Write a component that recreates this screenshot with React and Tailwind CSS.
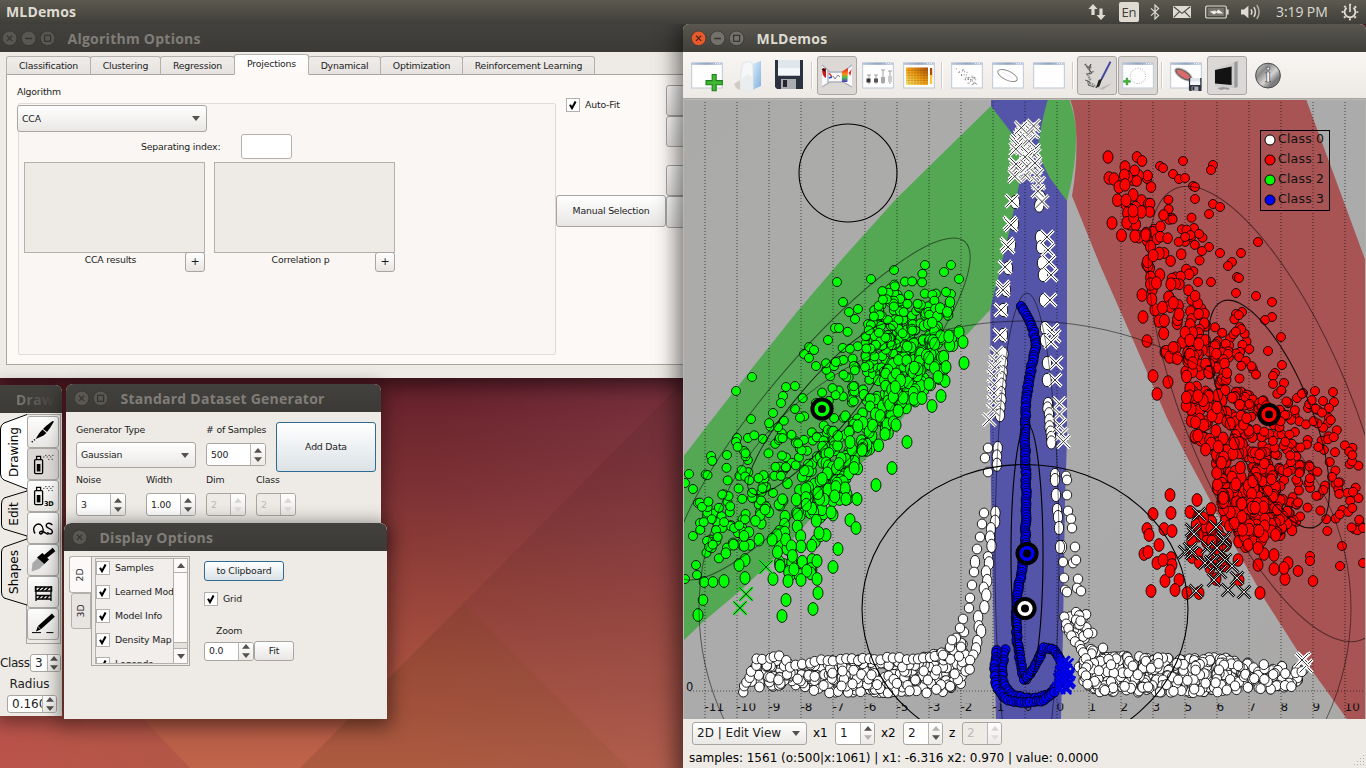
import React from "react";

/* ---------- shared widgets ---------- */

function Arrows({ up = "#55524e", down = "#55524e" }) {
  return (
    <svg viewBox="0 0 8 14" className="h-[14px] w-2 shrink-0">
      <path d="M4 0L8 4.8H0Z" fill={up} />
      <path d="M4 14L8 9.2H0Z" fill={down} />
    </svg>
  );
}

function Spin({ value, className, textClass = "text-[10px]", btn = "w-[15px]", disabled, up, down }) {
  return (
    <div className={"flex overflow-hidden rounded-[3px] border border-[#a9a6a2] " + (disabled ? "bg-[#eeebe7] text-[#bdbab7] " : "bg-white text-[#1c1c1c] ") + className}>
      <div className={"flex flex-1 items-center overflow-hidden whitespace-nowrap pl-1 " + textClass}>{value}</div>
      <div className={"flex shrink-0 items-center justify-center border-l border-[#b9b6b2] bg-gradient-to-b from-white to-[#eceae7] " + btn}>
        <Arrows up={up || (disabled ? "#d9d6d3" : "#55524e")} down={down || (disabled ? "#dfdcda" : "#55524e")} />
      </div>
    </div>
  );
}

function Combo({ value, className, textClass = "text-[10px]" }) {
  return (
    <div className={"flex items-center justify-between rounded-[3px] border border-[#a9a6a2] bg-gradient-to-b from-white to-[#eae8e5] pl-1 pr-1.5 text-[#1c1c1c] " + className}>
      <span className={textClass}>{value}</span>
      <svg viewBox="0 0 8 5" className="h-[5px] w-2"><path d="M0 0H8L4 5Z" fill="#55524e" /></svg>
    </div>
  );
}

function Button({ children, className }) {
  return (
    <div className={"flex items-center justify-center rounded-[3px] border border-[#a9a6a2] bg-gradient-to-b from-white to-[#e8e6e4] text-[#1c1c1c] " + className}>
      {children}
    </div>
  );
}

function Check({ label, className = "" }) {
  return (
    <div className={"flex items-center " + className}>
      <svg viewBox="0 0 14 14" className="size-[14px] shrink-0">
        <rect x=".5" y=".5" width="13" height="13" fill="#fff" stroke="#b4b1ad" />
        <path d="M4 6.8L6 10.2L9.6 3.6" fill="none" stroke="#000" strokeWidth="2.1" />
      </svg>
      <span className="ml-[5px] whitespace-nowrap">{label}</span>
    </div>
  );
}

function WinDot({ kind, active }) {
  const close = kind === "close";
  const fill = active && close ? "#e8592c" : active ? "#73716a" : "#585751";
  const ink = active && close ? "#4a2014" : "#34332f";
  return (
    <svg viewBox="0 0 16 16" className="size-4">
      <circle cx="7.6" cy="8.3" r="7.3" fill={fill} stroke="#33322e" strokeWidth=".7" />
      {close && <path d="M5 5.7L10.2 10.9M10.2 5.7L5 10.9" stroke={ink} strokeWidth="1.2" />}
      {kind === "min" && <path d="M4.2 8.5H11" stroke={ink} strokeWidth="1.3" />}
      {kind === "max" && <rect x="4.6" y="5.3" width="6" height="6" fill="none" stroke={ink} strokeWidth="1.2" />}
    </svg>
  );
}

function TitleBar({ title, dots, active, className = "", titleClass = "ml-[12px]" }) {
  return (
    <div className={"flex h-7 shrink-0 items-center overflow-hidden " + (active ? "bg-gradient-to-b from-[#59574f] to-[#403f3a] text-[#dfdbd2] " : "bg-gradient-to-b from-[#42413d] to-[#3b3a36] text-[#807d78] ") + className}>
      <div className="flex gap-[3px]">
        {dots.map((d) => <WinDot key={d} kind={d} active={active} />)}
      </div>
      <span className={"whitespace-nowrap pt-0.5 font-['Open_Sans','Noto_Sans',sans-serif] text-[14px] font-bold leading-[26px] tracking-[0.25px] " + titleClass}>{title}</span>
    </div>
  );
}

/* ---------- top panel ---------- */

function TopPanel() {
  return (
    <div className="relative flex h-6 items-center justify-between bg-gradient-to-b from-[#5c5a50] to-[#3f3e38] pl-1.5 pr-[7px] font-['Open_Sans','Noto_Sans',sans-serif] text-[#dfdbd2]">
      <span className="text-[14px] font-bold leading-6 tracking-[0.15px]">MLDemos</span>
      <div className="flex items-center">
        <svg viewBox="0 0 18 16" className="h-4 w-[18px]" fill="#dfdbd2">
          <path d="M5 0L9.6 5H6.6V11H3.4V5H.4Z" />
          <path d="M13 16L17.6 11H14.6V4.5H11.4V11H8.4Z" />
        </svg>
        <span className="ml-[13px] flex h-5 w-5 items-center justify-center rounded-[2px] bg-[#dfdbd2] text-[13px] leading-none text-[#3c3b37]">En</span>
        <svg viewBox="0 0 10 16" className="ml-[11px] h-4 w-[10px]" fill="none" stroke="#dfdbd2" strokeWidth="1.2">
          <path d="M1 4.4L8.6 11.4L5 15V1L8.6 4.6L1 11.6" />
        </svg>
        <svg viewBox="0 0 18 12" className="ml-[13px] h-3 w-[18px]">
          <rect width="18" height="12" fill="#dfdbd2" />
          <path d="M.8 .8L9 7.4L17.2 .8M.8 11.4L6.4 5.6M17.2 11.4L11.6 5.6" fill="none" stroke="#45443e" strokeWidth="1.1" />
        </svg>
        <svg viewBox="0 0 24 14" className="ml-[14px] h-[14px] w-6">
          <rect x=".7" y="1" width="20.6" height="12" rx="1.6" fill="none" stroke="#dfdbd2" strokeWidth="1.2" />
          <rect x="2.8" y="3" width="16.4" height="8" fill="#77746c" />
          <rect x="22" y="4.4" width="1.6" height="5.2" fill="#dfdbd2" />
          <path d="M4.8 6.6L10.4 5.6L11 7L13.4 4.4L18.4 8.4L12.6 8.6L12 7.4L9 9.6Z" fill="#f0ede6" />
        </svg>
        <svg viewBox="0 0 21 16" className="ml-[12px] h-4 w-[21px]" fill="none" stroke="#dfdbd2" strokeWidth="1.5">
          <path d="M0 5.6H3L7.4 1.8V14.2L3 10.4H0Z" fill="#dfdbd2" stroke="none" />
          <path d="M10 5.4Q11.8 8 10 10.6M12.8 3.2Q16 8 12.8 12.8" />
          <path d="M15.8 1Q20.4 8 15.8 15" stroke="#aeaba2" />
        </svg>
        <span className="ml-[14px] w-[54px] whitespace-nowrap text-[14px] leading-6 tracking-[-0.1px]">3:19 PM</span>
        <svg viewBox="0 0 18 18" className="ml-[11px] size-[18px]" fill="none" stroke="#dfdbd2">
          <path d="M5.6 4.7A5.4 5.4 0 1 0 12.4 4.7" strokeWidth="1.8" />
          <circle cx="9" cy="9" r="7.3" strokeWidth="2" strokeDasharray="2 3.73" strokeDashoffset="1" />
          <path d="M9 2.4V9" strokeWidth="2.8" stroke="#4a4942" />
          <path d="M9 1.6V9" strokeWidth="1.7" />
        </svg>
      </div>
    </div>
  );
}

/* ---------- algorithm options ---------- */

const TABS = [
  ["Classification", "w-[85px]"], ["Clustering", "w-[71px]"], ["Regression", "w-[75px]"], ["Projections", "w-[75px]"],
  ["Dynamical", "w-[73px]"], ["Optimization", "w-[83px]"], ["Reinforcement Learning", "w-[133px]"],
];

function ResultBox({ label }) {
  return (
    <div className="w-[181px]">
      <div className="h-[91px] border border-[#b4b1ad] bg-[#eeebe7]" />
      <div className="-mt-px flex items-start">
        <span className="mt-0.5 w-[161px] pl-[12px] text-center leading-[11px]">{label}</span>
        <Button className="h-5 w-5 text-[11px]">+</Button>
      </div>
    </div>
  );
}

function AlgorithmWindow() {
  return (
    <div className="absolute left-0 top-6 flex h-[354px] w-[700px] flex-col bg-[#eeebe6] text-[9.33px] tracking-[-0.19px] text-[#1c1c1c] shadow-[0_4px_18px_4px_rgba(0,0,0,0.5)]">
      <TitleBar title="Algorithm Options" dots={["close", "min", "max"]} className="pl-[1.5px]" titleClass="ml-[12px]" />
      <div className="z-10 -mb-px flex h-[23px] items-end pl-1.5">
        {TABS.map(([t, w], i) => (
          <div key={t} className={"-mr-px flex items-center justify-center whitespace-nowrap rounded-t-[3px] border border-[#b4b1ad] " + w + (i === 3 ? " z-10 h-[21px] border-b-[#fdf9f6] bg-gradient-to-b from-white to-[#fdf9f6] pb-px" : " h-[19px] border-b-[#a8a5a1] bg-gradient-to-b from-[#efece9] to-[#e6e3e0]")}>
            {t}
          </div>
        ))}
      </div>
      <div className="ml-1.5 flex h-[291px] border border-[#a8a5a1] bg-[#fdf9f6]">
        <div className="w-[549px] pl-[10px] pt-[10px]">
          <div className="leading-[13px]">Algorithm</div>
          <div className="ml-px mt-[5px] h-[252px] w-[538px] rounded-[2px] border border-[#dfdbd8] bg-[#faf6f3]">
            <Combo value="CCA" className="-ml-[2px] mt-px h-[27px] w-[190px]" textClass="text-[9.33px]" />
            <div className="mt-[2px] flex items-center pl-[122px]">
              <span className="w-[100px] whitespace-nowrap">Separating index:</span>
              <div className="h-[25px] w-[51px] rounded-[3px] border border-[#b4b1ad] bg-white" />
            </div>
            <div className="mt-[3px] flex gap-[9px] pl-[5px]">
              <ResultBox label="CCA results" />
              <ResultBox label="Correlation p" />
            </div>
          </div>
        </div>
        <div className="flex w-[110px] flex-col">
          <Check label="Auto-Fit" className="ml-[10px] mt-[23px]" />
          <Button className="mt-[83px] h-8 w-[110px]">Manual Selection</Button>
        </div>
        <div className="flex w-[34px] flex-col pt-[10px]">
          <Button className="h-[31px] w-[60px]" />
          <Button className="h-[31px] w-[60px]" />
          <Button className="mt-[18px] h-[31px] w-[60px]" />
          <Button className="h-8 w-[60px]" />
        </div>
      </div>
    </div>
  );
}

/* ---------- drawing palette ---------- */

const TOOL_ICONS = [
  <g key="a"><path d="M26 4.5L24.5 4L18 9L15 12L19 15L22 11Z" /><path d="M14.4 12.4L18.4 16L15.6 18.6L10 21L7.6 22L11 16.5Z" /><path d="M7 22.5L3.4 25.4" stroke="#000" strokeWidth="1.3" strokeDasharray="1.3 1.6" /></g>,
  <g key="b"><rect x="6.6" y="10.6" width="8" height="14" rx="1" fill="none" stroke="#000" strokeWidth="1.3" /><rect x="8.8" y="15" width="3.6" height="7.4" /><path d="M8.6 10V7.4H12.6V10" fill="none" stroke="#000" strokeWidth="1.3" /><path d="M15 8H25M17 6.4H26M20 10.4H25" stroke="#555" strokeDasharray="1.5 2" /></g>,
  <g key="c"><rect x="6.6" y="9.6" width="8" height="14" rx="1" fill="none" stroke="#000" strokeWidth="1.3" /><rect x="8.8" y="14" width="3.6" height="7.4" /><path d="M8.6 9V6.4H12.6V9" fill="none" stroke="#000" strokeWidth="1.3" /><path d="M15 7.4H25M17 5.6H26M20 9.6H25" stroke="#555" strokeDasharray="1.5 2" /><text x="16" y="24.6" fontSize="6.6" fontWeight="bold" fontFamily="DejaVu Sans" letterSpacing="-.3">3D</text></g>,
  <g key="d" fill="none" stroke="#000" strokeWidth="1.4"><path d="M7 20.5C3.5 15 8 9.5 12.5 11.5C16 14 16 20 13 21C10.5 21 11.5 17.5 14.5 18.5C17 19.5 18.5 21 20.5 21.4" /><path d="M24.4 12.2C22 9 17.4 10 18.4 13.4C19.6 16 24.4 15.4 24.4 18.4C24.4 21.6 20 21.6 19.6 19" /></g>,
  <g key="e"><path d="M10 13L16.5 19L11 24L3.6 26.6L4.5 18Z" fill="#aaa" /><path d="M9 12.5L14.4 8L21 14.5L16.4 19Z" /><path d="M17 11.8L26 4.5" stroke="#000" strokeWidth="4.2" /></g>,
  <g key="f" fill="none" stroke="#000" strokeWidth="1.3"><path d="M8 9V24M23 9V24M7.4 10H23.6V14H7.4ZM8 18.5H23V22H8Z" /><path d="M9.5 14L13.5 10M13.5 14L17.5 10M17.5 14L21.5 10M10 22L13 18.6M14 22L17 18.6M18 22L21 18.6" strokeWidth="1.5" /></g>,
  <g key="g"><path d="M11.4 18.6L25.4 6.2" stroke="#000" strokeWidth="4.4" /><path d="M8 22.4L9.6 17.6L12.6 20.6Z" /><path d="M4 23.6H13M18.4 23.6H25.4" stroke="#000" strokeWidth="1" /></g>,
];

function VTab({ label, d, active, h, className }) {
  return (
    <div className={"relative flex w-[27px] items-center justify-center " + className}>
      <svg viewBox={`0 0 27 ${h}`} className="absolute inset-0 size-full"><path d={d} fill={active ? "#fff" : "#edeae6"} stroke="#000" strokeWidth="1" /></svg>
      <span className="relative -rotate-90 whitespace-nowrap text-[12px] text-black">{label}</span>
    </div>
  );
}

function DrawingWindow() {
  return (
    <div className="absolute left-0 top-[385px] flex h-[331px] w-[62px] flex-col overflow-hidden rounded-tr-[7px] bg-[#eeebe6] text-[#1c1c1c] shadow-[0_4px_18px_3px_rgba(0,0,0,0.4)]">
      <TitleBar title="Draw" dots={[]} className="pl-[16px]" titleClass="bg-gradient-to-r from-[#807d78] to-[#403f3b] bg-clip-text text-transparent" />
      <div className="flex h-[231px] pt-px">
        <div className="flex w-[26px] flex-col">
          <VTab label="Drawing" active h={76} className="h-[76px]" d="M27 .5L4 9Q.5 11 .5 15V60Q.5 64 4 66L27 75" />
          <VTab label="Edit" h={48} className="h-[48px]" d="M27 1L4 8Q1.5 10 1.5 14V34Q1.5 38 4 39L27 46" />
          <VTab label="Shapes" h={68} className="h-[68px]" d="M27 1L4 9Q1.5 11 1.5 14V54Q1.5 58 4 60L27 67" />
        </div>
        <div className="flex w-[35px] flex-col border border-[#a9a6a2] pt-px">
          {TOOL_ICONS.map((ic, i) => (
            <div key={i} className={"flex h-8 w-8 shrink-0 items-center justify-center rounded-[3px] border border-[#aaa7a3] " + (i === 1 ? "bg-[#dcd8d5]" : "bg-gradient-to-b from-[#fdfdfd] to-[#e9e7e4]")}>
              <svg viewBox="0 0 30 30" className="size-[30px]">{ic}</svg>
            </div>
          ))}
        </div>
      </div>
      <div className="mt-2.5 flex items-center">
        <span className="w-[30px] whitespace-nowrap text-[12px] tracking-[-0.4px]">Class</span>
        <Spin value="3" className="h-[18px] w-[31px]" textClass="text-[12px]" btn="w-[13px]" />
      </div>
      <div className="mt-[4px] pr-[3px] text-center text-[12px] leading-4">Radius</div>
      <Spin value="0.160" className="ml-[7px] mt-[3px] h-[18px] w-[50px]" textClass="text-[12px]" btn="w-[14px]" />
    </div>
  );
}

/* ---------- dataset generator ---------- */

function GeneratorWindow() {
  return (
    <div className="absolute left-[66px] top-[384px] flex h-[160px] w-[315px] flex-col overflow-hidden rounded-t-[7px] bg-[#eeebe6] text-[9.33px] tracking-[-0.19px] text-[#1c1c1c] shadow-[0_4px_18px_3px_rgba(0,0,0,0.4)]">
      <TitleBar title="Standard Dataset Generator" dots={["close", "max"]} className="pl-[7.5px]" titleClass="ml-[12px]" />
      <div className="flex pl-[10px] pt-[10px]">
        <div className="w-[130px]">
          <div className="leading-4">Generator Type</div>
          <Combo value="Gaussian" className="mt-[4px] h-[26px] w-[120px]" textClass="text-[9.33px]" />
        </div>
        <div className="w-[70px]">
          <div className="whitespace-nowrap leading-4">{"# of Samples"}</div>
          <Spin value="500" className="mt-[5px] h-[23px] w-[60px]" textClass="text-[9.33px]" />
        </div>
        <Button className="h-[50px] w-[100px] !border-[#2d6a94] !to-[#dbe2e6]">Add Data</Button>
      </div>
      <div className="flex pl-[10px]">
        <div className="w-[70px]"><div className="leading-4">Noise</div><Spin value="3" className="mt-[5px] h-[23px] w-[50px]" textClass="text-[9.33px]" /></div>
        <div className="w-[60px]"><div className="leading-4">Width</div><Spin value="1.00" className="mt-[5px] h-[23px] w-[50px]" textClass="text-[9.33px]" /></div>
        <div className="w-[50px]"><div className="leading-4">Dim</div><Spin value="2" disabled className="mt-[5px] h-[23px] w-[40px]" textClass="text-[9.33px]" /></div>
        <div className="w-[50px]"><div className="leading-4">Class</div><Spin value="2" disabled className="mt-[5px] h-[23px] w-[40px]" textClass="text-[9.33px]" /></div>
      </div>
    </div>
  );
}

/* ---------- display options ---------- */

function DisplayWindow() {
  return (
    <div className="absolute left-16 top-[523px] flex h-[196px] w-[323px] flex-col overflow-hidden rounded-t-[7px] bg-[#eeebe6] text-[9.33px] tracking-[-0.15px] text-[#1c1c1c] shadow-[0_4px_18px_4px_rgba(0,0,0,0.45)]">
      <TitleBar title="Display Options" dots={["close"]} className="rounded-t-[7px] pl-[7.5px]" titleClass="ml-[12px]" />
      <div className="flex pl-[5px] pt-[5px]">
        <div className="flex w-[22px] flex-col items-end">
          <div className="flex h-[37px] w-[22px] items-center justify-center rounded-l-[3px] border border-r-0 border-[#b4b1ad] bg-[#fbfaf8]"><span className="-rotate-90">2D</span></div>
          <div className="flex h-[36px] w-[20px] items-center justify-center rounded-l-[3px] border border-[#b4b1ad] bg-[#e7e4e1]"><span className="-rotate-90">3D</span></div>
        </div>
        <div className="flex h-[110px] w-[99px] border border-[#a9a6a2] p-px pl-[3px]">
          <div className="flex h-[106px] w-[93px] border border-[#b4b1ad] bg-[#f1eeeb]">
            <div className="flex h-[104px] w-[77px] flex-col gap-[10px] overflow-hidden pt-[2px]">
              {["Samples", "Learned Models", "Model Info", "Density Map", "Legends"].map((t) => <Check key={t} label={t} className="shrink-0" />)}
            </div>
            <div className="flex flex-1 flex-col items-center justify-between border-l border-[#b4b1ad] bg-[#fbfaf9]">
              <div className="flex h-[14px] w-full items-center justify-center border-b border-[#b4b1ad]"><svg viewBox="0 0 8 5" className="h-[5px] w-2"><path d="M0 5H8L4 0Z" fill="#55524e" /></svg></div>
              <div className="flex w-full flex-col">
                <div className="h-[7px] w-full border-y border-[#b4b1ad] bg-[#e4e2df]" />
                <div className="flex h-[14px] w-full items-center justify-center"><svg viewBox="0 0 8 5" className="h-[5px] w-2"><path d="M0 0H8L4 5Z" fill="#55524e" /></svg></div>
              </div>
            </div>
          </div>
        </div>
        <div className="ml-[14px] pt-[5px]">
          <Button className="h-5 w-20 !border-[#2d6a94] !to-[#dbe2e6] text-[9.33px]">to Clipboard</Button>
          <Check label="Grid" className="mt-[11px]" />
          <div className="mt-[17px] pl-3 leading-4">Zoom</div>
          <div className="mt-[2px] flex items-center">
            <Spin value="0.0" className="h-[19px] w-[50px]" textClass="text-[9.33px]" />
            <Button className="h-5 w-10">Fit</Button>
          </div>
        </div>
      </div>
    </div>
  );
}

/* ---------- plot ---------- */

function makeRng(seed) {
  let s = seed;
  return () => {
    s = (s + 0x6d2b79f5) | 0;
    let t = Math.imul(s ^ (s >>> 15), 1 | s);
    t = (t + Math.imul(t ^ (t >>> 7), 61 | t)) ^ t;
    return ((t ^ (t >>> 14)) >>> 0) / 4294967296;
  };
}

function inside(x, y, poly) {
  let c = false;
  for (let i = 0, j = poly.length - 1; i < poly.length; j = i++) {
    const [xi, yi] = poly[i];
    const [xj, yj] = poly[j];
    if (yi > y !== yj > y && x < ((xj - xi) * (y - yi)) / (yj - yi) + xi) c = !c;
  }
  return c;
}

function scatter(poly, n, seed) {
  const r = makeRng(seed);
  const xs = poly.map((p) => p[0]);
  const ys = poly.map((p) => p[1]);
  const x0 = Math.min(...xs), x1 = Math.max(...xs), y0 = Math.min(...ys), y1 = Math.max(...ys);
  const out = [];
  while (out.length < n) {
    const x = x0 + r() * (x1 - x0), y = y0 + r() * (y1 - y0);
    if (inside(x, y, poly)) out.push([x, y]);
  }
  return out;
}

function along(pts, step, jitter = 0, seed = 1) {
  const r = makeRng(seed);
  const out = [];
  for (let i = 0; i < pts.length - 1; i++) {
    const [ax, ay] = pts[i];
    const [bx, by] = pts[i + 1];
    const n = Math.max(1, Math.round(Math.hypot(bx - ax, by - ay) / step));
    for (let k = 0; k < n; k++) out.push([ax + ((bx - ax) * k) / n + (r() - 0.5) * jitter, ay + ((by - ay) * k) / n + (r() - 0.5) * jitter]);
  }
  return out;
}

const GREEN = [
  [837,282],[843,302],[894,270],[871,279],[849,312],[858,309],[855,319],[835,328],[839,328],[828,340],[809,347],[814,350],[804,354],[809,358],[816,366],[752,377],[736,391],[786,387],[795,386],[783,396],[781,403],[795,409],[773,413],[751,419],[737,438],[736,442],[748,438],[744,451],[711,456],[727,455],[689,474],[685,483],[693,489],[698,503],[693,536],[700,523],[696,565],[697,575],[704,582],[713,582],[724,581],[703,600],[698,615],[685,579],[745,578],[745,560],[739,565],[742,543],[749,532],
  ...scatter([[690,480],[720,450],[770,420],[815,420],[812,505],[765,545],[715,568],[703,550],[703,500]], 105, 11),
  ...scatter([[830,420],[850,360],[870,315],[885,290],[905,280],[930,330],[925,390],[890,430],[850,500],[810,500],[775,475],[782,450]], 205, 5),
  ...scatter([[865,325],[880,290],[925,272],[950,285],[956,335],[945,375],[900,405],[865,380]], 190, 7),
  ...scatter([[820,430],[900,405],[895,430],[860,480],[855,505],[820,500]], 50, 8),
  ...scatter([[785,490],[850,480],[833,515],[822,540],[812,575],[778,580],[768,545]], 62, 9),
  ...scatter([[698,500],[725,498],[745,520],[735,545],[710,560],[700,530]], 24, 10),
  ...scatter([[820,370],[855,320],[860,350],[835,400],[790,430],[800,400]], 22, 12),
  [925,265],[951,265],[959,279],[944,272],[946,292],[950,302],[959,332],[963,342],[964,363],[946,367],[945,381],[938,377],[929,384],[941,396],[932,406],[914,399],[922,398],[907,442],[892,468],[876,485],[846,499],[857,499],[850,520],[856,528],[839,464],[862,450],[826,535],[819,533],[838,549],[833,567],[817,561],[817,579],[818,593],[813,609],[786,600],[782,616],[773,579],[780,566],[801,580],[788,581],[829,453],[850,442],[885,434],[896,425],
];

const RED = [
  [1108,157],[1137,157],[1142,161],[1183,161],[1213,165],[1211,170],[1109,178],[1114,179],[1119,187],[1125,167],[1134,173],[1160,166],[1163,168],[1173,174],[1179,179],[1185,178],[1193,186],[1195,187],[1151,187],[1147,178],[1195,199],[1213,204],[1220,207],[1209,214],[1112,223],[1258,242],[1241,253],[1232,262],[1228,266],[1237,277],[1239,278],[1198,282],[1211,282],[1209,247],[1220,253],[1236,293],[1256,296],[1272,302],[1272,317],[1265,320],[1242,312],[1236,314],[1281,337],[1268,351],[1282,365],[1275,373],[1284,383],[1273,376],[1273,384],[1142,295],[1143,317],[1153,376],[1157,394],[1147,341],[1165,352],[1168,382],[1315,391],[1333,392],[1334,402],[1323,401],[1297,398],[1303,393],[1329,408],[1329,418],[1328,423],[1308,408],
  ...scatter([[1119,160],[1145,160],[1152,188],[1150,205],[1134,196],[1118,188]], 9, 21),
  ...scatter([[1117,200],[1165,198],[1200,215],[1198,228],[1160,245],[1120,240]], 34, 22),
  ...scatter([[1134,235],[1200,225],[1215,262],[1190,280],[1150,275],[1138,262]], 32, 23),
  ...scatter([[1150,275],[1180,280],[1200,300],[1210,330],[1240,310],[1250,350],[1195,380],[1160,350],[1150,320]], 80, 24),
  ...scatter([[1165,350],[1215,335],[1260,370],[1260,400],[1180,395]], 58, 25),
  ...scatter([[1183,395],[1260,390],[1285,480],[1280,530],[1228,535],[1218,500],[1216,460],[1197,450],[1190,420]], 300, 26),
  ...scatter([[1260,390],[1300,390],[1340,420],[1350,445],[1364,450],[1363,530],[1300,535],[1270,530]], 150, 27),
  ...scatter([[1225,505],[1300,500],[1290,535],[1245,547],[1232,540]], 60, 28),
  [1363,528],[1342,546],[1310,556],[1310,561],[1340,566],[1288,563],[1298,571],[1285,579],[1284,568],[1274,569],[1274,555],[1264,554],[1258,565],[1258,548],[1238,560],[1248,545],[1260,593],[1313,581],[1363,563],
  [1170,495],[1197,500],[1153,514],[1171,513],[1190,512],[1211,509],[1147,529],[1149,535],[1164,529],[1172,531],[1159,545],[1144,554],[1148,552],[1171,558],[1157,563],[1163,560],[1172,565],[1165,581],[1170,571],[1179,580],[1175,590],[1151,591],[1192,557],[1187,593],[1199,593],[1239,580],[1210,568],[1216,579],
  ...scatter([[1188,515],[1210,518],[1228,545],[1225,575],[1205,570],[1192,555]], 34, 29),
];

const WHITE_FLOOR = [
  ...scatter([[745,689],[752,665],[775,658],[800,668],[815,661],[925,657],[945,650],[962,640],[968,662],[965,682],[940,693],[820,693],[790,684],[765,688]], 420, 31),
  ...scatter([[1078,665],[1090,648],[1100,655],[1180,658],[1235,657],[1250,664],[1248,690],[1215,693],[1095,692],[1082,680]], 430, 32),
  ...scatter([[1250,664],[1275,663],[1303,668],[1306,675],[1290,688],[1258,690],[1250,680]], 55, 33),
  ...along([[743,691],[752,672],[758,660],[780,657],[790,667],[815,660],[930,658],[948,650]], 6, 3, 34),
];

const WHITE_STRANDS = [
  ...along([[997,448],[996,473]], 8, 2, 41), ...along([[995,513],[991,537],[988,564],[985,597],[984,609],[979,619],[981,633],[976,648],[972,662],[967,676]], 9, 4, 42),
  [988,448],[985,458],[988,472],[984,513],[982,524],[980,537],[977,549],[975,562],[974,572],[972,585],[970,598],[969,608],[963,619],[964,632],[960,628],[956,638],[950,647],[952,640],[961,647],[943,655],
  [1015,202],[1014,224],[1011,245],[1008,268],[1006,290],[1003,310],[1003,335],
  ...along([[1003,354],[1003,372],[1001,385],[1001,400],[1000,415],[1000,425]], 8, 1, 43),
  ...along([[1040,198],[1040,212]], 7, 2, 44), [1040,237],[1041,247],[1042,263],[1043,275],[1044,300],[1045,328],[1045,340],[1047,363],[1047,380],[1048,404],
  ...along([[1048,408],[1050,427],[1052,448]], 6, 1, 45),
  [1055,475],[1055,480],[1056,495],[1057,510],[1058,517],[1059,528],[1062,547],[1060,547],[1063,562],[1064,578],[1065,590],[1067,592],[1066,476],[1067,480],[1067,495],[1068,511],[1071,519],[1072,528],[1075,547],[1073,563],[1076,560],[1078,579],[1077,588],[1081,591],
  ...scatter([[1063,608],[1085,610],[1095,630],[1092,640],[1075,640],[1065,628]], 26, 46), ...along([[1068,630],[1075,641],[1083,649],[1088,665],[1082,672],[1090,688]], 6, 4, 47), [1103,648],
];

const WHITE_X = [
  ...scatter([[1020,126],[1034,125],[1036,150],[1037,175],[1014,180],[1013,158]], 34, 51),
  ...along([[1036,165],[1042,210]], 10, 4, 52),
  [1012,201],[1010,223],[1011,225],[1007,244],[1008,247],[1005,267],[1003,287],[1003,290],[1001,310],[1000,335],
  ...along([[998,352],[995,375],[993,400],[989,428]], 9, 3, 53),
  [1047,237],[1048,250],[1049,262],[1051,275],[1050,300],[1052,330],[1054,336],[1051,342],[1056,363],[1055,380],
  ...along([[1060,403],[1060,425],[1063,450]], 9, 3, 54), [1304,659],[1306,666],[1302,660],
];

const DARK_X = [[1199,514],[1192,530],[1194,534],[1185,552],[1192,553],[1190,549],[1216,527],[1224,538],[1223,541],[1208,547],[1212,553],[1222,553],[1205,563],[1216,566],[1225,560],[1232,566],[1220,572],[1214,580],[1237,578],[1196,591],[1228,590],[1244,592],[1217,548],[1211,562]];

const BLUE_CURVE = [
  ...along([[1021,306],[1027,316],[1033,330],[1036,345],[1033,360],[1029,380],[1026,400],[1025,440],[1026,480],[1026,520],[1025,545],[1022,570],[1018,590],[1016,612],[1017,640],[1020,660],[1024,679],[1030,674],[1038,660],[1044,647],[1055,650],[1063,665],[1062,682]], 2.6, 1.2, 61),
  ...along([[1005,650],[1002,665],[1003,685],[1013,696],[1033,699],[1048,695],[1058,685]], 3, 1.5, 62),
  ...along([[997,651],[995,668],[996,686],[1005,699],[1022,703],[1042,701],[1056,691]], 3, 1.5, 63),
];

const BLUE_X = scatter([[1060,660],[1068,658],[1072,672],[1070,686],[1064,694],[1057,688]], 26, 64);

const AXIS_LABELS = ["-11", "-10", "-9", "-8", "-7", "-6", "-5", "-3", "-2", "-1", "0", "0", "1", "2", "3", "5", "6", "7", "8", "9", "10"];

function Dots({ pts, fill, size }) {
  return pts.map(([x, y], i) => {
    const [rx, ry] = size(x, y);
    return <ellipse key={i} cx={x.toFixed(1)} cy={y.toFixed(1)} rx={rx} ry={ry} fill={fill} stroke="#000" strokeWidth="1" strokeOpacity=".85" />;
  });
}

function Crosses({ pts, outer, inner, ow, r = 6.5 }) {
  return pts.map(([x, y], i) => {
    const d = `M${(x - r).toFixed(1)} ${(y - r).toFixed(1)}l${2 * r} ${2 * r}m0 ${-2 * r}l${-2 * r} ${2 * r}`;
    return <g key={i} fill="none"><path d={d} stroke={outer} strokeWidth={ow} /><path d={d} stroke={inner} strokeWidth="1" /></g>;
  });
}

function Marker({ x, y, color }) {
  return <g><circle cx={x} cy={y} r="9.6" fill={color} stroke="#000" strokeWidth="4" /><circle cx={x} cy={y} r="4" /></g>;
}

const greenSize = (x, y) => {
  const p = (x - 822) * 0.754 + (y - 409) * 0.657;
  return p > 38 ? [5, 6.4] : p > 22 ? [4.8, 5.4] : [4.5, 4.5];
};
const redSize = (x, y) => {
  const p = (x - 1269) * 0.92 - (y - 414) * 0.38;
  if (y > 490 && x < 1225) return [5, 6.4];
  return p < -38 ? [5, 6.3] : p < -20 ? [4.8, 5.4] : [4.5, 4.5];
};
const strandSize = (x, y) => (x > 1062 || x < 975 || (y > 440 && x < 990 && y < 560) ? [4.7, 4.9] : [4.7, 6.6]);

function Plot() {
  const sortFar = (pts, size) => [...pts].sort((a, b) => size(...a)[1] - size(...b)[1]);
  return (
    <svg viewBox="683 99 683 620" className="block h-[620px] w-[683px] shrink-0" fontFamily="DejaVu Sans, sans-serif">
      <defs>
        <linearGradient id="bg" x1="0" y1="0" x2="1" y2="1"><stop offset="0" stopColor="#aaaba9" /><stop offset=".5" stopColor="#acabac" /><stop offset="1" stopColor="#aaa9a8" /></linearGradient>
        <clipPath id="axis"><rect x="683" y="703.5" width="683" height="15" /></clipPath>
      </defs>
      <rect x="683" y="99" width="683" height="620" fill="url(#bg)" />
      <path d="M991 100H1067V440L1065 500L1063 633L1061 719H996L993 600L990 430Z" fill="#5454a8" />
      <path d="M991 106L950 146L896 199L843 258L796 313L757 362L713 418L683 457V641L703 622L741 590L760 572L787 545L846 480L896 427L950 353L975 326L990 310L1000 270L1010 228L1020 180L1023 158L1017 140Z" fill="#54a854" />
      <path d="M1048 99H1069Q1075 115 1076 130Q1077 165 1067 201L1050 178Q1040 160 1038 148Q1041 122 1048 99Z" fill="#54a854" />
      <path d="M1070 99H1306L1334 175L1366 262V719H1347L1297 650L1265 600L1233 543L1187 457L1167 418L1130 333L1100 265L1072 196Q1078 160 1076 130Q1075 112 1070 99Z" fill="#a85454" />
      <g stroke="#000" strokeOpacity=".36" strokeWidth="1.7">
        {AXIS_LABELS.map((v, i) => <path key={i} d={`M${705 + i * 32} 102V719`} strokeDasharray="1 2" />)}
        <path d="M690 691H1366" strokeDasharray="1 2" />
      </g>
      <g clipPath="url(#axis)" fontSize="12" fill="#111">
        {AXIS_LABELS.map((v, i) => <text key={i} x={704.5 + i * 32} y="711">{v}</text>)}
      </g>
      <text x="686" y="691" fontSize="11.5" fill="#111">0</text>
      <Dots pts={WHITE_FLOOR} fill="#fff" size={() => [4.7, 5]} />
      <Dots pts={WHITE_STRANDS} fill="#fff" size={strandSize} />
      <Dots pts={sortFar(RED, redSize)} fill="#f00" size={redSize} />
      <Dots pts={sortFar(GREEN, greenSize)} fill="#0f0" size={greenSize} />
      <Dots pts={BLUE_CURVE} fill="#00f" size={() => [4.7, 4.8]} />
      <Crosses pts={WHITE_X} outer="#fff" inner="#3a3a3a" ow="3.2" />
      <Crosses pts={DARK_X} outer="#111" inner="#ccc" ow="2.8" />
      <Crosses pts={BLUE_X} outer="#00f" inner="#0000a8" ow="2.6" r={5} />
      <Crosses pts={[[766,567],[746,594],[740,608]]} outer="#0e0" inner="#031" ow="2.8" />
      <g fill="none" stroke="#000">
        <circle cx="848" cy="173" r="49" strokeWidth="1.1" />
        <ellipse cx="1025" cy="609" rx="163" ry="144.5" strokeWidth="1.1" />
        <ellipse cx="1025" cy="609" rx="326" ry="288" strokeWidth="1" strokeOpacity=".5" />
        <ellipse cx="1027" cy="554" rx="16" ry="130" strokeWidth="1.1" />
        <ellipse cx="1027" cy="554" rx="32" ry="261" strokeWidth="1" strokeOpacity=".5" />
        <ellipse cx="822" cy="409" rx="110" ry="26.5" transform="rotate(-49.6 822 409)" strokeWidth="1" strokeOpacity=".75" />
        <ellipse cx="822" cy="409" rx="220" ry="53" transform="rotate(-49.6 822 409)" strokeWidth="1" strokeOpacity=".5" />
        <ellipse cx="1269" cy="414" rx="122" ry="41.5" transform="rotate(67.5 1269 414)" strokeWidth="1.1" strokeOpacity=".85" />
        <ellipse cx="1269" cy="414" rx="244" ry="83" transform="rotate(67.5 1269 414)" strokeWidth="1" strokeOpacity=".5" />
      </g>
      <Marker x={822} y={409} color="#0f0" />
      <Marker x={1269} y={414.5} color="#f00" />
      <Marker x={1027} y={553.5} color="#00f" />
      <Marker x={1025} y={608.5} color="#fff" />
      <rect x="1260.5" y="130.5" width="69" height="80" fill="none" stroke="#000" />
      {["#fff", "#f00", "#0f0", "#00f"].map((c, i) => (
        <g key={c}>
          <circle cx="1270" cy={140 + i * 20} r="5" fill={c} stroke="#000" />
          <text x="1278" y={143 + i * 20} fontSize="12.5" textLength="46" fill="#111">{"Class " + i}</text>
        </g>
      ))}
      <path d="M683.5 99V719M683 99.5H1366" stroke="#b9b7b4" />
      <path d="M1365.5 99V719" stroke="#b4b2b0" />
    </svg>
  );
}

/* ---------- toolbar ---------- */

function Sheet({ children }) {
  return (
    <svg viewBox="0 0 32 32" className="size-8">
      <defs><linearGradient id="sheetBar" x1="0" x2="1" y1="0" y2="0"><stop offset="0" stopColor="#b9c7da" /><stop offset=".5" stopColor="#93a5bf" /><stop offset="1" stopColor="#c3cfdf" /></linearGradient></defs>
      <rect x=".6" y="3.6" width="30.8" height="24.4" fill="#fefefe" stroke="#c6cfdb" strokeWidth="1.2" />
      <rect x="0" y="2.4" width="32" height="2.4" fill="url(#sheetBar)" />
      <path d="M24 3.6H30" stroke="#eef" strokeDasharray="1 1" />
      {children}
    </svg>
  );
}

function Floppy({ x = 0, y = 0, s = 1 }) {
  return (
    <g transform={`translate(${x} ${y}) scale(${s})`}>
      <path d="M2 0H30V29H4L2 27Z" fill="#2d3240" />
      <rect x="5" y="0" width="22" height="15.5" fill="#dfe7ec" />
      <rect x="5" y="8" width="22" height="7.5" fill="#f4f7f9" />
      <rect x="8" y="19" width="15" height="10" fill="#a9adb1" />
      <rect x="10" y="20" width="4" height="7" fill="#23262f" />
    </g>
  );
}

function Plus({ x, y, s }) {
  return <path transform={`translate(${x} ${y}) scale(${s})`} d="M6 0H10V6H16V10H10V16H6V10H0V6H6Z" fill="#3db830" stroke="#1b7a1b" strokeWidth="1" />;
}

function Tool({ pressed, children, className = "" }) {
  return (
    <div className={"flex h-[39px] w-10 shrink-0 items-center justify-center rounded-[3px] border " + (pressed ? "border-[#aaa6a3] bg-[#dcd8d5] " : "border-transparent ") + className}>{children}</div>
  );
}

function Sep({ className }) {
  return <div className={"h-[27px] w-0.5 shrink-0 border-l border-[#cfccc8] bg-white " + className} />;
}

function Toolbar() {
  const speck = scatter([[4, 9], [10, 8], [25, 18], [26, 25], [18, 24]], 42, 71);
  return (
    <div className="flex h-[47px] shrink-0 items-center border-b border-[#a9a6a2] bg-gradient-to-b from-[#f8f5f2] to-[#edeae6] pl-[4px] pt-px">
      <Tool><Sheet><Plus x="15" y="14.5" s="1.02" /></Sheet></Tool>
      <Tool className="ml-px">
        <svg viewBox="0 0 32 32" className="size-8">
          <defs><linearGradient id="fold" x1="0" x2="1" y1="0" y2="1"><stop offset="0" stopColor="#ddeefb" /><stop offset="1" stopColor="#7fb1de" /></linearGradient></defs>
          <path d="M2 24L8 20V30L4 28Z" fill="#cfccc8" />
          <path d="M20 4L29 1V26L20 30Z" fill="url(#fold)" />
          <path d="M11 3L19 1.5L21 6V30L13 31L9 28V12Z" fill="#f5f7f8" stroke="#dde1e4" strokeWidth=".8" />
          <path d="M8 20L16 14L21 17V31L10 29Z" fill="#ebeeef" />
        </svg>
      </Tool>
      <Tool className="ml-px"><svg viewBox="0 0 32 32" className="size-8"><Floppy /></svg></Tool>
      <Sep className="ml-[2px]" />
      <Tool pressed className="ml-[4px]">
        <svg viewBox="0 0 32 32" className="size-8">
          <defs><linearGradient id="rb" x1="0" x2="0" y1="0" y2="1"><stop offset="0" stopColor="#e01818" /><stop offset=".45" stopColor="#ff8b18" /><stop offset=".65" stopColor="#4cc840" /><stop offset="1" stopColor="#5032d0" /></linearGradient></defs>
          <path d="M1 5L9 12H22L31 5V27L22 22H9L1 27Z" fill="#fafafa" />
          <path d="M1 5L9 12H22L31 5M31 27L22 22H9L1 27M7 10V24M21.5 12V22" fill="none" stroke="#aeb0ba" strokeWidth="1.4" />
          <path d="M1 9L5 8L5 18Q1 16 1 9Z" fill="#d01818" /><path d="M1.5 8.6L4 11" stroke="#111" strokeWidth="2" />
          <path d="M21 11.6L27 8L26.4 22L21 22Z" fill="url(#rb)" />
          <path d="M27.6 13L30.6 9L29.4 16Z" fill="#e22" />
          <path d="M8 13L11 17" stroke="#d33" strokeWidth="1.3" /><path d="M8 18L11 17" stroke="#24d" strokeWidth="1.6" />
          <path d="M12 16L14 19L17 15L19 17" fill="none" stroke="#777" strokeWidth=".9" />
        </svg>
      </Tool>
      <Tool className="ml-px">
        <Sheet>
          <g stroke="#999" strokeWidth=".9" fill="none"><path d="M7 15V24M14 15V24M21 10V24M28 11V24M5 15H9M12 15H16M19 10H23M26 11H30" /></g>
          <rect x="4.5" y="18.5" width="4" height="4" fill="#333" /><rect x="12" y="18.5" width="4" height="4" fill="#555" /><rect x="19" y="17" width="4" height="6" fill="#aaa" /><rect x="26" y="16" width="4" height="6" fill="#ccc" />
        </Sheet>
      </Tool>
      <Tool className="ml-px">
        <Sheet>
          <defs><linearGradient id="heat" x1="0" x2="1" y1="1" y2="0"><stop offset="0" stopColor="#fff27a" /><stop offset=".5" stopColor="#f6a414" /><stop offset="1" stopColor="#a64a06" /></linearGradient></defs>
          <rect x="3" y="7.5" width="22" height="17.5" fill="url(#heat)" /><rect x="27" y="8" width="2.2" height="9" fill="#a84c08" /><rect x="27" y="15" width="2.2" height="9" fill="#fbc730" />
          <path d="M3 10.5H25M3 13H25M3 15.5H25M3 18H25M3 20.5H25M3 23H25M6 8V25M9 8V25M12 8V25M15 8V25M18 8V25M21 8V25" stroke="#7a4a10" strokeOpacity=".35" strokeWidth=".7" />
        </Sheet>
      </Tool>
      <Sep className="ml-[2px]" />
      <Tool className="ml-[4px]"><Sheet>{speck.map(([x, y], i) => <circle key={i} cx={x} cy={y} r=".55" fill="#777" />)}</Sheet></Tool>
      <Tool className="ml-px"><Sheet><ellipse cx="15.5" cy="15.5" rx="10.5" ry="4.5" transform="rotate(25 15.5 15.5)" fill="none" stroke="#888" strokeWidth=".9" /><path d="M10 12L21 18" stroke="#e6e6e6" strokeWidth=".7" /></Sheet></Tool>
      <Tool className="ml-px"><Sheet /></Tool>
      <Sep className="ml-[3px]" />
      <Tool pressed className="ml-[3px]">
        <svg viewBox="0 0 32 32" className="size-8">
          <path d="M18 28.5L31 23L22 30Z" fill="#bbb" />
          <path d="M4 4L7 8L10 6L8 11L11 12L7 15L9 19L6 22L11 24L15 27L18 26" fill="none" stroke="#8a8a8a" strokeWidth="2.4" strokeDasharray="1.4 1" />
          <path d="M4 4L7 8L10 4L8 10L11 13L5 14M4 20L9 22L7 25L13 27" fill="none" stroke="#555" strokeWidth=".9" />
          <path d="M29.5 1.6L20.6 19" stroke="#4448a0" strokeWidth="2" /><path d="M21.4 18.6L18.6 26L15 28L17.6 20Z" fill="#222" />
        </svg>
      </Tool>
      <Tool pressed className="ml-px"><Sheet><circle cx="16" cy="16" r="7.6" fill="none" stroke="#aaa" strokeDasharray="1 1.5" /><Plus x="1.5" y="18" s=".43" /></Sheet></Tool>
      <Sep className="ml-[3px]" />
      <Tool className="ml-[3px]">
        <Sheet>
          <ellipse cx="13.5" cy="14.5" rx="10.5" ry="5" transform="rotate(32 13.5 14.5)" fill="#77716f" fillOpacity=".45" />
          <ellipse cx="13.5" cy="14.5" rx="9.5" ry="4" transform="rotate(32 13.5 14.5)" fill="#6a6462" />
          <ellipse cx="13.5" cy="14.5" rx="7.8" ry="2.8" transform="rotate(32 13.5 14.5)" fill="#dd6a6a" />
          <Floppy x="18" y="18" s=".45" />
        </Sheet>
      </Tool>
      <Tool pressed className="ml-px">
        <svg viewBox="0 0 32 32" className="size-8">
          <path d="M3.5 9L22.5 2.4L26.5 .8L27 27L23 28L3.5 26Z" fill="#cdcdcd" /><path d="M4 10L20.6 6.4V25L4 23.4Z" fill="#131313" /><path d="M23.4 2.4L26.6 1V27L23.4 28Z" fill="#9a9a9a" />
          <path d="M6 28L12 27L19 28L17 30L14 29L10 30Z" fill="#999" />
        </svg>
      </Tool>
      <Tool className="ml-px">
        <svg viewBox="0 0 32 32" className="size-8">
          <defs><linearGradient id="inf" x1="0" x2="1" y1="0" y2="1"><stop offset="0" stopColor="#e4e4e4" /><stop offset=".3" stopColor="#8a8a8a" /><stop offset=".55" stopColor="#d4d4d4" /><stop offset=".75" stopColor="#7a7a7a" /><stop offset="1" stopColor="#909090" /></linearGradient></defs>
          <circle cx="16" cy="15.6" r="12.4" fill="url(#inf)" stroke="#4a4a4a" strokeWidth="1" />
          <text x="16" y="22.4" textAnchor="middle" fontSize="20" fontWeight="bold" fontFamily="Liberation Serif, serif" fill="#fff" stroke="#444" strokeWidth=".7">i</text>
        </svg>
      </Tool>
    </div>
  );
}

function MainWindow() {
  return (
    <div className="absolute left-[683px] top-6 flex h-[746px] w-[683px] flex-col overflow-hidden rounded-t-[6px] bg-[#eeebe6] text-black shadow-[0_6px_22px_6px_rgba(0,0,0,0.55)]">
      <TitleBar title="MLDemos" active dots={["close", "min", "max"]} className="pl-[7.5px]" titleClass="ml-[12px]" />
      <Toolbar />
      <Plot />
      <div className="flex h-7 shrink-0 items-center pl-[9px] text-[12px]">
        <Combo value="2D | Edit View" className="h-[23px] w-[115px]" textClass="text-[12px] whitespace-nowrap" />
        <span className="ml-[6px] w-[22px]">x1</span>
        <Spin value="1" className="h-[23px] w-10" textClass="text-[12px]" btn="w-[14px]" down="#b5b2af" />
        <span className="ml-[6px] w-[22px]">x2</span>
        <Spin value="2" className="h-[23px] w-10" textClass="text-[12px]" btn="w-[14px]" up="#b5b2af" />
        <span className="ml-[6px] w-[13px]">z</span>
        <Spin value="2" disabled className="h-[23px] w-10" textClass="text-[12px]" btn="w-[14px]" />
      </div>
      <div className="flex shrink-0 items-center justify-between pl-1.5 pr-px text-[12px] leading-[22px]">
        <span className="whitespace-nowrap">samples: 1561 (o:500|x:1061) | x1: -6.316 x2: 0.970 | value: 0.0000</span>
        <svg viewBox="0 0 12 12" className="mt-1 size-3" fill="#b5b2ae"><path d="M10 1h1v1h-1zM10 4h1v1h-1zM7 4h1v1h-1zM10 7h1v1h-1zM7 7h1v1h-1zM4 7h1v1h-1zM10 10h1v1h-1zM7 10h1v1h-1zM4 10h1v1h-1zM1 10h1v1h-1z" /></svg>
      </div>
    </div>
  );
}

function Wallpaper() {
  return (
    <svg viewBox="0 0 1366 768" className="absolute inset-0 h-[768px] w-[1366px]">
      <defs>
        <linearGradient id="wall" gradientUnits="userSpaceOnUse" x1="0" y1="370" x2="0" y2="768">
          <stop offset="0" stopColor="#641f2b" /><stop offset=".3" stopColor="#7c3134" /><stop offset=".6" stopColor="#9b463b" /><stop offset="1" stopColor="#c0644a" />
        </linearGradient>
        <linearGradient id="glow" gradientUnits="userSpaceOnUse" x1="430" y1="0" x2="690" y2="0"><stop offset="0" stopColor="#9a5a78" stopOpacity="0" /><stop offset="1" stopColor="#a86070" stopOpacity=".22" /></linearGradient>
        <linearGradient id="left" gradientUnits="userSpaceOnUse" x1="0" y1="0" x2="200" y2="0"><stop offset="0" stopColor="#b84a4c" stopOpacity=".6" /><stop offset="1" stopColor="#a84c44" stopOpacity=".5" /></linearGradient>
      </defs>
      <rect width="1366" height="768" fill="url(#wall)" />
      <rect x="430" width="300" height="768" fill="url(#glow)" />
      <path d="M0 700H125L190 768H0Z" fill="url(#left)" />
      <path d="M680 385L300 768H683V385Z" fill="#000" fillOpacity=".06" />
      <path d="M463 603L300 768H628Z" fill="#6a4010" fillOpacity=".1" />
    </svg>
  );
}

export default function App() {
  return (
    <div className="relative h-[768px] w-[1366px] overflow-hidden bg-[#66222e] font-['DejaVu_Sans',sans-serif]">
      <Wallpaper />
      <AlgorithmWindow />
      <DrawingWindow />
      <GeneratorWindow />
      <DisplayWindow />
      <MainWindow />
      <TopPanel />
    </div>
  );
}
